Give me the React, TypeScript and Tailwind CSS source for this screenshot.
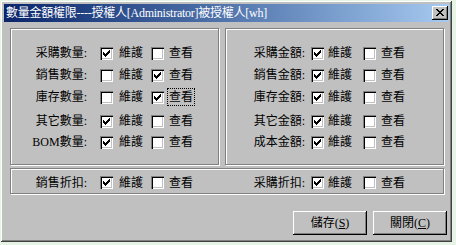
type Row = {
  label: string
  keep: boolean
  view: boolean
  focus?: boolean
  extra?: string
}

const leftRows: Row[] = [
  { label: '采購數量:', keep: true, view: false },
  { label: '銷售數量:', keep: false, view: true },
  { label: '庫存數量:', keep: false, view: true, focus: true },
  { label: '其它數量:', keep: true, view: false, extra: 'mt-[2px]' },
  { label: 'BOM數量:', keep: true, view: false, extra: '-mt-px' },
]

const rightRows: Row[] = [
  { label: '采購金額:', keep: true, view: false },
  { label: '銷售金額:', keep: true, view: false },
  { label: '庫存金額:', keep: true, view: false },
  { label: '其它金額:', keep: true, view: false, extra: 'mt-[2px]' },
  { label: '成本金額:', keep: true, view: false, extra: '-mt-px' },
]

function Check({ on, className = '' }: { on: boolean; className?: string }) {
  return (
    <span
      className={`relative block h-[13px] w-[13px] shrink-0 bg-white shadow-[inset_1px_1px_#808080,inset_2px_2px_#000,inset_-1px_-1px_#fff,inset_-2px_-2px_#c0c0c0] ${className}`}
    >
      {on && (
        <svg width="7" height="7" viewBox="0 0 7 7" shapeRendering="crispEdges" className="absolute left-[3px] top-[3px]">
          <path
            fill="#000"
            d="M6 0h1v1H6z M5 1h2v1H5z M0 2h1v1H0z M4 2h3v1H4z M0 3h2v1H0z M3 3h3v1H3z M0 4h5v1H0z M1 5h3v1H1z M2 6h1v1H2z"
          />
        </svg>
      )}
    </span>
  )
}

// left column layout
function LeftLine({ r }: { r: Row }) {
  return (
    <div className={`flex h-[22px] items-center ${r.extra ?? ''}`}>
      <span className="w-[76px] text-right">{r.label}</span>
      <Check on={r.keep} className="ml-[13px]" />
      <span className="ml-[6px] w-[32px]">維護</span>
      <Check on={r.view} />
      <span
        className={`ml-[3px] border px-px leading-[16px] ${r.focus ? 'border-dotted border-black' : 'border-transparent'}`}
      >
        查看
      </span>
    </div>
  )
}

// right column layout
function RightLine({ r }: { r: Row }) {
  return (
    <div className={`flex h-[22px] items-center ${r.extra ?? ''}`}>
      <span className="w-[79px] text-right">{r.label}</span>
      <Check on={r.keep} className="ml-[6px]" />
      <span className="ml-[4px] w-[35px]">維護</span>
      <Check on={r.view} />
      <span className="ml-[3px] border border-transparent px-px leading-[16px]">查看</span>
    </div>
  )
}

function Button({ label, hot }: { label: string; hot: string }) {
  return (
    <button className="flex h-[24px] w-[74px] items-center justify-center bg-[#c0c0c0] shadow-[inset_-1px_-1px_#000,inset_1px_1px_#fff,inset_-2px_-2px_#808080]">
      {label}(<u>{hot}</u>)
    </button>
  )
}

export default function App() {
  return (
    <div className="h-[245px] w-[456px] bg-[#e6f4e6] pl-px pt-px font-['Liberation_Serif','Noto_Sans_CJK_TC',serif] text-[12px] text-black">
      <div className="flex h-[241px] w-[451px] flex-col bg-[#c0c0c0] p-[3px] shadow-[inset_-1px_-1px_#404040,inset_1px_1px_#fff,inset_-2px_-2px_#808080]">
        <div className="flex h-[18px] items-center bg-gradient-to-r from-[#0a246a] to-[#a6caf0] pl-[2px] text-white">
          <span className="flex-1 whitespace-nowrap tracking-[-0.25px]">數量金額權限----授權人[Administrator]被授權人[wh]</span>
          <span className="relative mr-px block h-[14px] w-[16px] bg-[#c0c0c0] shadow-[inset_-1px_-1px_#000,inset_1px_1px_#fff,inset_-2px_-2px_#808080]">
            <svg width="8" height="7" viewBox="0 0 8 7" shapeRendering="crispEdges" className="absolute left-[4px] top-[3px]">
              <path
                fill="#000"
                d="M0 0h2v1H0z M6 0h2v1H6z M1 1h2v1H1z M5 1h2v1H5z M2 2h4v1H2z M3 3h2v1H3z M2 4h4v1H2z M1 5h2v1H1z M5 5h2v1H5z M0 6h2v1H0z M6 6h2v1H6z"
              />
            </svg>
          </span>
        </div>

        <div className="ml-[6px] mt-[6px] flex gap-[6px]">
          <div className="flex h-[137px] w-[209px] flex-col border border-[#808080] pt-[13px] shadow-[1px_1px_#fff,inset_1px_1px_#fff]">
            {leftRows.map((r) => (
              <LeftLine key={r.label} r={r} />
            ))}
          </div>
          <div className="flex h-[137px] w-[219px] flex-col border border-[#808080] pt-[13px] shadow-[1px_1px_#fff,inset_1px_1px_#fff]">
            {rightRows.map((r) => (
              <RightLine key={r.label} r={r} />
            ))}
          </div>
        </div>

        <div className="ml-[6px] mt-[3px] flex h-[26px] w-[434px] items-center border border-[#808080] pt-[3px] shadow-[1px_1px_#fff,inset_1px_1px_#fff]">
          <div className="w-[215px]">
            <LeftLine r={{ label: '銷售折扣:', keep: true, view: false }} />
          </div>
          <RightLine r={{ label: '采購折扣:', keep: true, view: false }} />
        </div>

        <div className="mr-[2px] mt-[17px] flex justify-end gap-[6px]">
          <Button label="儲存" hot="S" />
          <Button label="關閉" hot="C" />
        </div>
      </div>
    </div>
  )
}
